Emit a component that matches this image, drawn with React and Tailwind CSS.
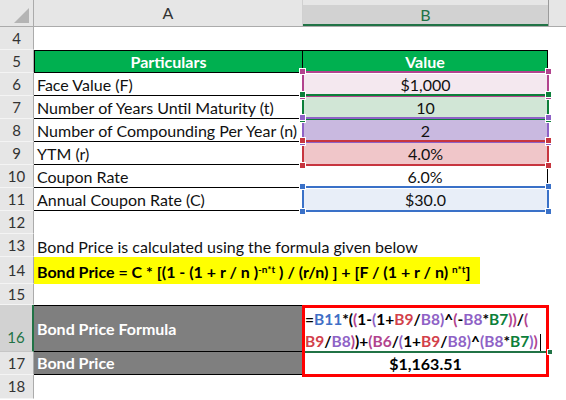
import React from 'react';

const font = { fontFamily: 'Lato, "Liberation Sans", sans-serif' };

function RowHead({ n, active }) {
  return (
    <div
      className={`w-[34px] shrink-0 flex items-center justify-center text-[15px] border-r border-b ${
        active
          ? 'bg-[#d2d2d2] text-[#217346] border-r-2 border-r-[#217346] border-b-[#c6c6c6] items-end pb-[3px]'
          : 'bg-[#e6e6e6] text-[#333] border-r-[#ababab] border-b-[#f4f4f4]'
      }`}
    >
      {n}
    </div>
  );
}

function Handle({ pos, color }) {
  return <div className={`absolute w-[7px] h-[7px] border border-white z-20 ${pos} ${color}`} />;
}

function RefCell({ children, fill, border, handle }) {
  return (
    <div className="relative w-[245px] shrink-0 h-full">
      <div className={`absolute left-[1px] right-[1px] top-[1px] bottom-0 flex items-center justify-center text-[16px] text-[#111] ${fill}`}>
        {children}
      </div>
      <div className={`absolute left-[-1px] right-[-1px] top-[-2px] bottom-[-1px] border-2 z-10 ${border}`} />
      <Handle pos="left-[-4px] top-[-5px]" color={handle} />
      <Handle pos="right-[-4px] top-[-5px]" color={handle} />
      <Handle pos="left-[-4px] bottom-[-4px]" color={handle} />
      <Handle pos="right-[-4px] bottom-[-4px]" color={handle} />
    </div>
  );
}

function Row({ n, h, children, active }) {
  return (
    <div className={`flex ${h}`}>
      <RowHead n={n} active={active} />
      {children}
    </div>
  );
}

function ACell({ children, className = '' }) {
  return (
    <div className={`w-[269px] shrink-0 flex items-center pl-[3px] pt-[2px] text-[16px] text-[#111] whitespace-nowrap ${className}`}>
      {children}
    </div>
  );
}

const R = ({ c, children }) => <span className={c}>{children}</span>;

export default function App() {
  const blue = 'text-[#3f6fc6]';
  const red = 'text-[#d2404a]';
  const purple = 'text-[#8e62c6]';
  const green = 'text-[#0c7f3a]';
  const mag = 'text-[#b2438e]';

  return (
    <div className="w-[566px] h-[400px] bg-white overflow-hidden" style={font}>
      {/* column headers */}
      <div className="flex h-[27px] bg-[#e6e6e6] border-b border-[#ababab]">
        <div className="w-[34px] shrink-0 relative border-r border-[#ababab]">
          <div className="absolute right-[4px] bottom-[3px] w-0 h-0 border-l-[15px] border-l-transparent border-b-[15px] border-b-[#b4b4b4]" />
        </div>
        <div className="w-[269px] shrink-0 flex items-center justify-center text-[16px] text-[#333] border-r border-[#d0d0d0]">
          A
        </div>
        <div className="w-[245px] shrink-0 mt-[5px] bg-[#d2d2d2] border-b-2 border-[#217346] flex items-center justify-center text-[16px] text-[#217346]">
          B
        </div>
        <div className="flex-1 border-l border-[#9b9b9b]" />
      </div>

      <Row n={4} h="h-[23px]">
        <ACell />
      </Row>

      <Row n={5} h="h-[23px]">
        <div className="w-[514px] shrink-0 flex bg-[#00b050] border border-black text-white font-bold text-[16px]">
          <div className="w-[268px] flex items-center justify-center border-r border-black">Particulars</div>
          <div className="flex-1 flex items-center justify-center">Value</div>
        </div>
      </Row>

      <Row n={6} h="h-[23px]">
        <ACell className="border-b border-black">Face Value (F)</ACell>
        <RefCell fill="bg-[#f4e8ef]" border="border-[#b2438e]" handle="bg-[#b2438e]">$1,000</RefCell>
      </Row>
      <Row n={7} h="h-[23px]">
        <ACell className="border-b border-black">Number of Years Until Maturity (t)</ACell>
        <RefCell fill="bg-[#d1e6d6]" border="border-[#0c7f3a]" handle="bg-[#0c7f3a]">10</RefCell>
      </Row>
      <Row n={8} h="h-[23px]">
        <ACell className="border-b border-black">Number of Compounding Per Year (n)</ACell>
        <RefCell fill="bg-[#c9b9e0]" border="border-[#8e62c6]" handle="bg-[#8e62c6]">2</RefCell>
      </Row>
      <Row n={9} h="h-[23px]">
        <ACell className="border-b border-black">YTM (r)</ACell>
        <RefCell fill="bg-[#f0c6c9]" border="border-[#c7353f]" handle="bg-[#c7353f]">4.0%</RefCell>
      </Row>
      <Row n={10} h="h-[23px]">
        <ACell className="border-b border-black">Coupon Rate</ACell>
        <div className="w-[245px] shrink-0 flex items-center justify-center text-[16px] text-[#111] border-r border-black">6.0%</div>
      </Row>
      <Row n={11} h="h-[23px]">
        <ACell className="border-b border-black">Annual Coupon Rate (C)</ACell>
        <RefCell fill="bg-[#e8eef8]" border="border-[#3a71c8]" handle="bg-[#3a71c8]">$30.0</RefCell>
      </Row>
      <Row n={12} h="h-[23px]">
        <ACell />
      </Row>
      <Row n={13} h="h-[23px]">
        <ACell className="overflow-visible">Bond Price is calculated using the formula given below</ACell>
      </Row>
      <Row n={14} h="h-[27px]">
        <div className="w-[269px] shrink-0 relative overflow-visible">
          <div className="absolute left-0 top-0 h-full w-[446px] bg-[#ffff00] flex items-center pl-[3px] pt-[2px] font-bold text-[16px] text-black whitespace-nowrap z-10">
            Bond Price = C * [(1 - (1 + r / n )
            <sup className="text-[10px] relative -top-[3px]">-n*t</sup>
            &nbsp;) / (r/n) ] + [F / (1 + r / n)&nbsp;
            <sup className="text-[10px] relative -top-[3px]">n*t</sup>]
          </div>
        </div>
      </Row>
      <Row n={15} h="h-[21px]">
        <ACell />
      </Row>

      <Row n={16} h="h-[47px]" active>
        <div className="w-[269px] shrink-0 bg-[#7f7f7f] border-t border-b border-black flex items-center pl-[3px] text-white font-bold text-[16px]">
          Bond Price Formula
        </div>
        <div className="w-[245px] shrink-0 relative border-t border-black">
          <div className="pl-[2px] pt-[2px] font-bold text-[15.5px] leading-[22px] text-black whitespace-nowrap">
            <div>
              =<R c={blue}>B11</R>*(<R c={mag}>(</R>1-<R c={purple}>(</R>1+<R c={red}>B9</R>/<R c={purple}>B8</R>
              <R c={purple}>)</R>^<R c={mag}>(</R>-<R c={purple}>B8</R>*<R c={green}>B7</R>
              <R c={mag}>)</R>
              <R c={mag}>)</R>/<R c={mag}>(</R>
            </div>
            <div>
              <R c={red}>B9</R>/<R c={purple}>B8</R>
              <R c={mag}>)</R>)+<R c={mag}>(</R>
              <R c={mag}>B6</R>/<R c={purple}>(</R>1+<R c={red}>B9</R>/<R c={purple}>B8</R>
              <R c={purple}>)</R>^<R c={purple}>(</R>
              <R c={purple}>B8</R>*<R c={green}>B7</R>
              <R c={purple}>)</R>
              <R c={mag}>)</R>
              <span className="inline-block w-px h-[18px] bg-black align-middle ml-[2px]" />
            </div>
          </div>
          <div className="absolute left-0 right-0 bottom-[-1px] h-[2px] bg-[#217346] z-10" />
          <div className="absolute right-[-5px] bottom-[-3px] w-[6px] h-[6px] bg-[#217346] border border-white z-30" />
          <div className="absolute left-[-1px] top-[-1px] w-[247px] h-[72px] border-[3px] border-[#ff0000] z-20" />
        </div>
      </Row>

      <Row n={17} h="h-[23px]">
        <div className="w-[269px] shrink-0 bg-[#7f7f7f] border-b border-black flex items-center pl-[3px] text-white font-bold text-[16px]">
          Bond Price
        </div>
        <div className="w-[245px] shrink-0 flex items-center justify-center font-bold text-[16px] text-black">
          $1,163.51
        </div>
      </Row>
      <Row n={18} h="h-[24px]">
        <ACell />
      </Row>
    </div>
  );
}
